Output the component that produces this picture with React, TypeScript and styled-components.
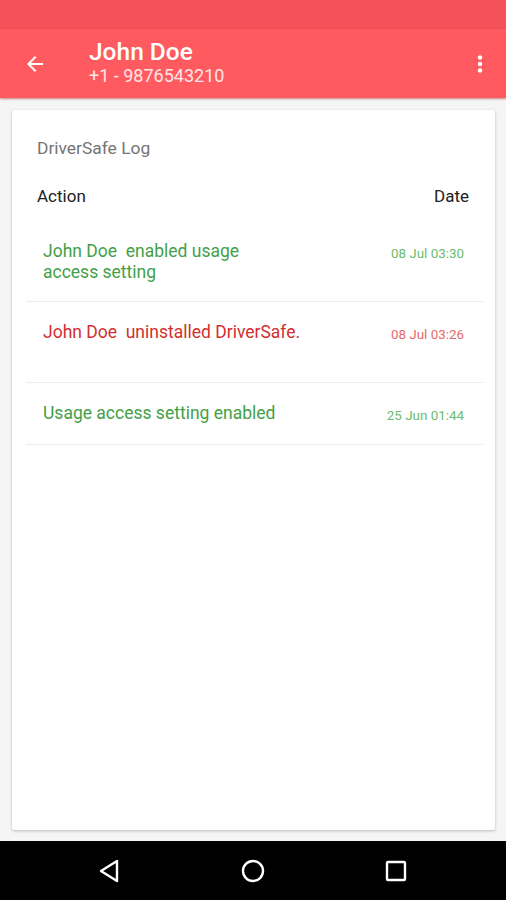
import styled, { createGlobalStyle } from 'styled-components';

const GlobalStyle = createGlobalStyle`
  html, body {
    margin: 0;
    padding: 0;
    background: #f5f5f5;
    font-family: Roboto, "Noto Sans", sans-serif;
  }
`;

const Screen = styled.div`
  width: 506px;
  height: 900px;
  display: flex;
  flex-direction: column;
  background: #f5f5f5;
  overflow: hidden;
`;

const StatusBar = styled.div`
  height: 29px;
  background: #f5515a;
  flex-shrink: 0;
`;

const Toolbar = styled.header`
  height: 69px;
  background: #ff5a60;
  display: flex;
  align-items: center;
  padding: 0 12px 0 21px;
  box-shadow: 0 1px 2px rgba(160, 20, 30, 0.5);
  flex-shrink: 0;
  position: relative;
  z-index: 1;
`;

const IconButton = styled.button`
  background: none;
  border: 0;
  padding: 0;
  width: 28px;
  height: 28px;
  display: flex;
  align-items: center;
  justify-content: center;
  color: #fff;
`;

const TitleBlock = styled.div`
  flex: 1;
  margin-left: 40px;
  display: flex;
  flex-direction: column;
  color: #fff;
  margin-top: -2px;
`;

const Title = styled.div`
  font-size: 24.5px;
  font-weight: 500;
  line-height: 26px;
`;

const Subtitle = styled.div`
  font-size: 18px;
  line-height: 21px;
  opacity: 0.85;
`;

const Body = styled.main`
  flex: 1;
  padding: 12px 11px 11px 12px;
  display: flex;
`;

const Card = styled.section`
  flex: 1;
  background: #fff;
  border-radius: 2px;
  box-shadow: 0 1px 3px rgba(0, 0, 0, 0.25);
  padding: 27px 12px 0 14px;
`;

const CardTitle = styled.div`
  font-size: 17.4px;
  color: #757575;
  padding-left: 11px;
  line-height: 22px;
`;

const HeadRow = styled.div`
  display: flex;
  justify-content: space-between;
  padding: 0 14px 0 11px;
  margin: 26px 0 14px;
  font-size: 17px;
  color: #212121;
  line-height: 22px;
`;

const Row = styled.div<{ $minLines: number }>`
  display: flex;
  justify-content: space-between;
  align-items: flex-start;
  padding: 20px 19px 18px 17px;
  min-height: ${(p) => p.$minLines * 21}px;
  border-bottom: 1px solid #ececec;
`;

const Message = styled.p<{ $color: string }>`
  margin: 0;
  width: 270px;
  font-size: 17.5px;
  line-height: 21px;
  white-space: pre-line;
  color: ${(p) => p.$color};
`;

const Stamp = styled.div<{ $color: string }>`
  font-size: 13.4px;
  line-height: 21px;
  color: ${(p) => p.$color};
  opacity: 0.9;
  margin-top: 2px;
  white-space: nowrap;
`;

const NavBar = styled.nav`
  height: 59px;
  background: #000;
  display: flex;
  align-items: center;
  justify-content: center;
  flex-shrink: 0;
`;

const NavSlot = styled.div`
  width: 143px;
  display: flex;
  justify-content: center;
`;

const GREEN = '#43a047';
const GREEN_LIGHT = '#5cb660';
const RED = '#d32f2f';
const RED_LIGHT = '#e05a5a';

type Entry = { text: string; date: string; kind: 'ok' | 'bad'; lines: number };

// name and action are separated by a double space, as in the app
const entries: Entry[] = [
  { text: 'John Doe\u00a0 enabled usage\naccess setting', date: '08 Jul 03:30', kind: 'ok', lines: 2 },
  { text: 'John Doe\u00a0 uninstalled DriverSafe.', date: '08 Jul 03:26', kind: 'bad', lines: 2 },
  { text: 'Usage access setting enabled', date: '25 Jun 01:44', kind: 'ok', lines: 1 },
];

export default function App() {
  return (
    <Screen>
      <GlobalStyle />
      <StatusBar />
      <Toolbar>
        <IconButton aria-label="back">
          <svg width="24" height="24" viewBox="0 0 24 24" fill="#fff">
            <path d="M20 11H7.83l5.59-5.59L12 4l-8 8 8 8 1.41-1.41L7.83 13H20v-2z" />
          </svg>
        </IconButton>
        <TitleBlock>
          <Title>John Doe</Title>
          <Subtitle>+1 - 9876543210</Subtitle>
        </TitleBlock>
        <IconButton aria-label="more">
          <svg width="24" height="24" viewBox="0 0 24 24" fill="#fff">
            <circle cx="12" cy="5.5" r="2.2" />
            <circle cx="12" cy="12" r="2.2" />
            <circle cx="12" cy="18.5" r="2.2" />
          </svg>
        </IconButton>
      </Toolbar>
      <Body>
        <Card>
          <CardTitle>DriverSafe Log</CardTitle>
          <HeadRow>
            <span>Action</span>
            <span>Date</span>
          </HeadRow>
          {entries.map((e) => {
            const c = e.kind === 'ok' ? GREEN : RED;
            const cl = e.kind === 'ok' ? GREEN_LIGHT : RED_LIGHT;
            return (
              <Row key={e.date} $minLines={e.lines}>
                <Message $color={c}>{e.text}</Message>
                <Stamp $color={cl}>{e.date}</Stamp>
              </Row>
            );
          })}
        </Card>
      </Body>
      <NavBar>
        <NavSlot>
          <svg width="26" height="26" viewBox="0 0 26 26" fill="none" stroke="#fff" strokeWidth="2.4" strokeLinejoin="round">
            <path d="M20 3 L20 23 L4 13 Z" />
          </svg>
        </NavSlot>
        <NavSlot>
          <svg width="26" height="26" viewBox="0 0 26 26" fill="none" stroke="#fff" strokeWidth="2.4">
            <circle cx="13" cy="13" r="10" />
          </svg>
        </NavSlot>
        <NavSlot>
          <svg width="26" height="26" viewBox="0 0 26 26" fill="none" stroke="#fff" strokeWidth="2.4" strokeLinejoin="round">
            <rect x="4" y="4" width="18" height="18" rx="1" />
          </svg>
        </NavSlot>
      </NavBar>
    </Screen>
  );
}
